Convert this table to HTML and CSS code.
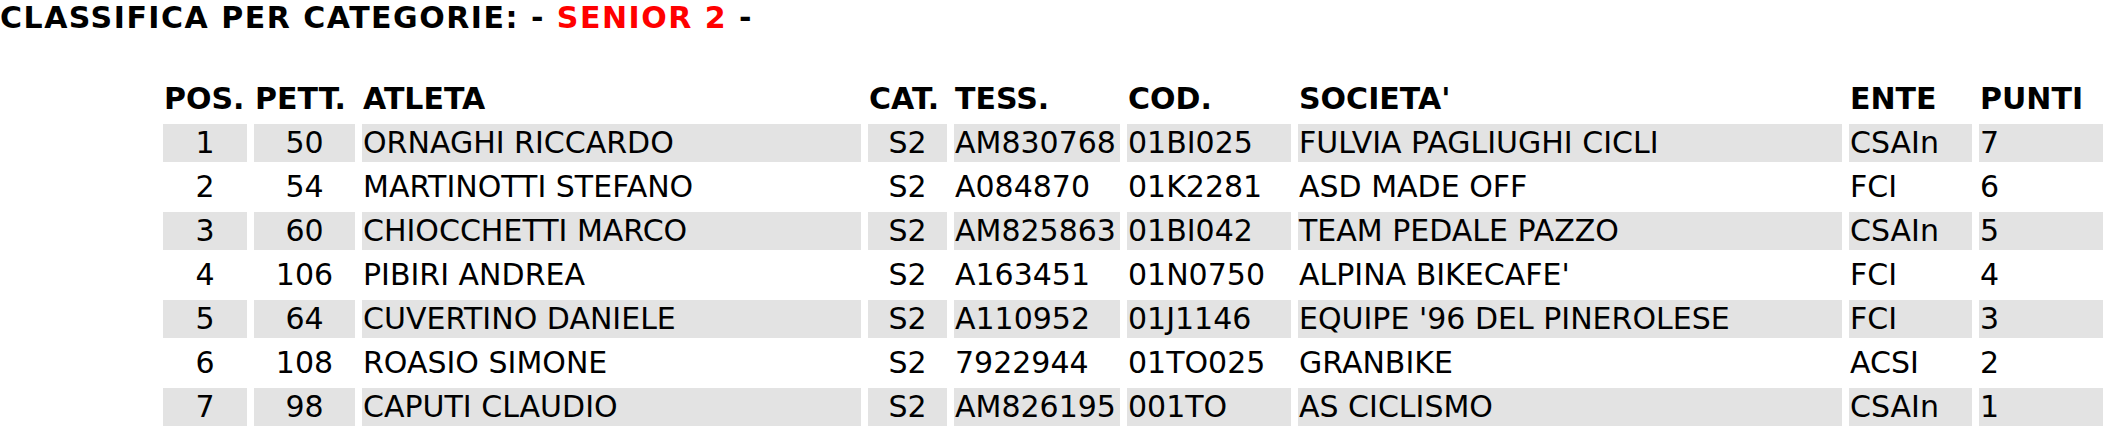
FILE: index.html
```html
<!DOCTYPE html>
<html lang="it">
<head>
<meta charset="utf-8">
<title>Classifica per categorie</title>
<link rel="stylesheet" href="styles.css">
</head>
<body>
<div class="title">CLASSIFICA PER CATEGORIE: - <span class="cat">SENIOR 2</span> -</div>
<table class="ranking">
  <colgroup>
    <col class="c-pos"><col class="c-pett"><col class="c-atleta"><col class="c-cat"><col class="c-tess"><col class="c-cod"><col class="c-soc"><col class="c-ente"><col class="c-punti">
  </colgroup>
  <thead>
    <tr><th>POS.</th><th>PETT.</th><th>ATLETA</th><th>CAT.</th><th>TESS.</th><th>COD.</th><th>SOCIETA'</th><th>ENTE</th><th>PUNTI</th></tr>
  </thead>
  <tbody>
    <tr class="odd"><td class="ctr">1</td><td class="ctr">50</td><td>ORNAGHI RICCARDO</td><td class="ctr">S2</td><td>AM830768</td><td>01BI025</td><td>FULVIA PAGLIUGHI CICLI</td><td>CSAIn</td><td>7</td></tr>
    <tr><td class="ctr">2</td><td class="ctr">54</td><td>MARTINOTTI STEFANO</td><td class="ctr">S2</td><td>A084870</td><td>01K2281</td><td>ASD MADE OFF</td><td>FCI</td><td>6</td></tr>
    <tr class="odd"><td class="ctr">3</td><td class="ctr">60</td><td>CHIOCCHETTI MARCO</td><td class="ctr">S2</td><td>AM825863</td><td>01BI042</td><td>TEAM PEDALE PAZZO</td><td>CSAIn</td><td>5</td></tr>
    <tr><td class="ctr">4</td><td class="ctr">106</td><td>PIBIRI ANDREA</td><td class="ctr">S2</td><td>A163451</td><td>01N0750</td><td>ALPINA BIKECAFE'</td><td>FCI</td><td>4</td></tr>
    <tr class="odd"><td class="ctr">5</td><td class="ctr">64</td><td>CUVERTINO DANIELE</td><td class="ctr">S2</td><td>A110952</td><td>01J1146</td><td>EQUIPE '96 DEL PINEROLESE</td><td>FCI</td><td>3</td></tr>
    <tr><td class="ctr">6</td><td class="ctr">108</td><td>ROASIO SIMONE</td><td class="ctr">S2</td><td>7922944</td><td>01TO025</td><td>GRANBIKE</td><td>ACSI</td><td>2</td></tr>
    <tr class="odd"><td class="ctr">7</td><td class="ctr">98</td><td>CAPUTI CLAUDIO</td><td class="ctr">S2</td><td>AM826195</td><td>001TO</td><td>AS CICLISMO</td><td>CSAIn</td><td>1</td></tr>
  </tbody>
</table>
</body>
</html>
```
FILE: styles.css
```css
html, body {
  margin: 0;
  padding: 0;
  background: #ffffff;
  overflow: hidden;
}
body {
  font-family: Verdana, "DejaVu Sans", sans-serif;
  color: #000000;
}
.title {
  font-weight: bold;
  font-size: 30px;
  line-height: 35px;
  letter-spacing: 1.5px;
  white-space: nowrap;
}
.title .cat {
  color: #ff0000;
}
.ranking {
  width: 1954px;
  margin-top: 39px;
  margin-left: 156px;
  border-collapse: separate;
  border-spacing: 7px 6.2px;
  table-layout: fixed;
  font-size: 30px;
  white-space: nowrap;
}
.c-pos { width: 84px; }
.c-pett { width: 101px; }
.c-atleta { width: 499px; }
.c-cat { width: 79px; }
.c-tess { width: 166px; }
.c-cod { width: 164px; }
.c-soc { width: 544px; }
.c-ente { width: 123px; }
.c-punti { width: 124px; }
.ranking th,
.ranking td {
  height: 38px;
  padding: 0 1px;
  line-height: 38px;
  text-align: left;
  vertical-align: middle;
  overflow: hidden;
  box-sizing: border-box;
}
.ranking th {
  font-weight: bold;
}
.ranking td.ctr {
  text-align: center;
}
.ranking tr.odd td {
  background: #e3e3e3;
}
```
